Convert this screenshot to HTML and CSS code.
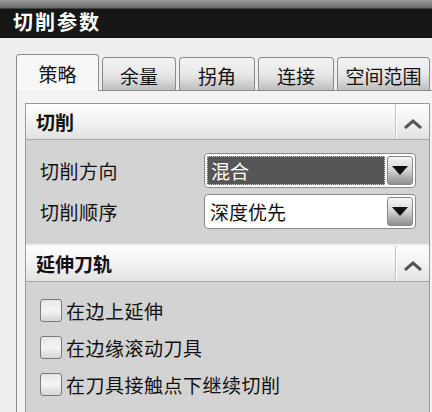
FILE: index.html
```html
<!DOCTYPE html>
<html lang="zh-CN">
<head>
  <meta charset="UTF-8">
  <title>切削参数</title>
  <link rel="stylesheet" href="styles.css">
</head>
<body>
  <!-- Title bar -->
  <div class="titlebar">
    <h1>切削参数</h1>
  </div>

  <!-- Tabs -->
  <div class="tabs">
    <div class="tab active" style="width:83px">策略</div>
    <div class="tab" style="width:74px">余量</div>
    <div class="tab" style="width:76px">拐角</div>
    <div class="tab" style="width:76px">连接</div>
    <div class="tab" style="width:93px">空间范围</div>
  </div>

  <div class="page">
    <div class="panel">
      <!-- Section: cutting -->
      <div class="sec-head">
        <span class="sec-title">切削</span>
        <span class="collapse">
          <svg width="20" height="10" viewBox="0 0 20 10"><polyline points="2,9 10,2 18,9" fill="none" stroke="#555" stroke-width="3"/></svg>
        </span>
      </div>
      <div class="sec-body rows">
        <div class="row">
          <span class="label">切削方向</span>
          <div class="select">
            <span class="value focused">混合</span>
            <span class="arrow"><i></i></span>
          </div>
        </div>
        <div class="row">
          <span class="label">切削顺序</span>
          <div class="select">
            <span class="value">深度优先</span>
            <span class="arrow"><i></i></span>
          </div>
        </div>
      </div>

      <!-- Section: extend toolpath -->
      <div class="sec-head">
        <span class="sec-title">延伸刀轨</span>
        <span class="collapse">
          <svg width="20" height="10" viewBox="0 0 20 10"><polyline points="2,9 10,2 18,9" fill="none" stroke="#555" stroke-width="3"/></svg>
        </span>
      </div>
      <div class="sec-body checks">
        <label class="check"><span class="box"></span>在边上延伸</label>
        <label class="check"><span class="box"></span>在边缘滚动刀具</label>
        <label class="check"><span class="box"></span>在刀具接触点下继续切削</label>
      </div>
    </div>
  </div>
</body>
</html>
```

FILE: styles.css
```css
/* General */
body {
  margin: 0;
  width: 432px;
  height: 412px;
  overflow: hidden;
  background: #eeeeee;
  font-family: "Noto Sans CJK SC", "Noto Sans", sans-serif;
  font-size: 19px;
  color: #111;
}

/* Title bar */
.titlebar {
  height: 38px;
  background: linear-gradient(#9a9a9a 0, #6a6a6a 8px, #161616 9px, #161616 100%);
  display: flex;
  align-items: center;
  padding: 6px 0 0 13px;
  box-sizing: border-box;
}

.titlebar h1 {
  margin: 0;
  font-size: 20px;
  font-weight: bold;
  letter-spacing: 2px;
  color: #fff;
  line-height: 1;
}

/* Tabs */
.tabs {
  display: flex;
  align-items: flex-end;
  gap: 3px;
  margin-top: 16px;
  padding-left: 16px;
  height: 36px;
  position: relative;
  z-index: 1;
}

.tab {
  height: 33px;
  box-sizing: border-box;
  border: 1px solid #8c8c8c;
  border-bottom: none;
  border-radius: 4px 4px 0 0;
  background: linear-gradient(#f4f4f4 0, #e6e6e6 55%, #bdbdbd 100%);
  display: flex;
  align-items: center;
  justify-content: center;
  line-height: 1;
  padding-top: 2px;
}

.tab.active {
  height: 37px;
  margin-bottom: -1px;
  background: #f7f7f7;
  padding-top: 0;
}

/* Tab page */
.page {
  height: 322px;
  margin-left: 16px;
  border-top: 1px solid #8c8c8c;
  border-left: 1px solid #8c8c8c;
  background: #f3f3f3;
  padding: 12px 0 0 8px;
}

.panel {
  width: 403px;
  height: 100%;
  border: 1px solid #9a9a9a;
  border-bottom: none;
  background: #d3d3d3;
}

/* Section header */
.sec-head {
  height: 35px;
  display: flex;
  align-items: stretch;
  background: linear-gradient(#fdfdfd 0, #f2f2f2 50%, #e2e2e2 100%);
  border-bottom: 1px solid #a8a8a8;
}

.sec-title {
  flex: 1;
  display: flex;
  align-items: center;
  padding-left: 10px;
  font-weight: bold;
  line-height: 1;
}

.collapse {
  width: 34px;
  border-left: 1px solid #c4c4c4;
  box-shadow: inset 1px 0 0 #fff;
  display: flex;
  align-items: center;
  justify-content: center;
  padding-top: 4px;
  box-sizing: border-box;
}

/* Rows with dropdowns */
.sec-body.rows {
  padding: 13px 0 15px 14px;
  display: flex;
  flex-direction: column;
  gap: 6px;
  border-bottom: 2px solid #f0f0f0;
}

.row {
  display: flex;
  align-items: center;
}

.label {
  width: 164px;
  letter-spacing: 0.5px;
  line-height: 1;
}

.select {
  width: 212px;
  height: 35px;
  box-sizing: border-box;
  border: 1px solid #8a8a8a;
  border-radius: 4px;
  background: #fff;
  display: flex;
  align-items: center;
  padding: 2px;
  gap: 2px;
}

.value {
  flex: 1;
  height: 100%;
  display: flex;
  align-items: center;
  padding-left: 3px;
  box-sizing: border-box;
  line-height: 1;
}

.value.focused {
  background: #565656;
  color: #fff;
  border: 1px dotted #cfcfcf;
}

.arrow {
  width: 26px;
  height: 100%;
  box-sizing: border-box;
  border: 1px solid #8a8a8a;
  border-radius: 3px;
  background: linear-gradient(#f5f5f5 0, #d8d8d8 45%, #8e8e8e 100%);
  display: flex;
  align-items: center;
  justify-content: center;
}

.arrow i {
  width: 0;
  height: 0;
  border-left: 8px solid transparent;
  border-right: 8px solid transparent;
  border-top: 9px solid #111;
}

/* Checkboxes */
.sec-body.checks {
  padding: 16px 0 0 14px;
  display: flex;
  flex-direction: column;
  gap: 13px;
}

.check {
  display: flex;
  align-items: center;
  gap: 4px;
  height: 24px;
  line-height: 1;
  letter-spacing: 0.5px;
}

.box {
  width: 22px;
  height: 23px;
  box-sizing: border-box;
  border: 1px solid #7a7a7a;
  border-radius: 3px;
  background: linear-gradient(#e6e6e6 0, #f4f4f4 50%, #d6d6d6 100%);
}
```
